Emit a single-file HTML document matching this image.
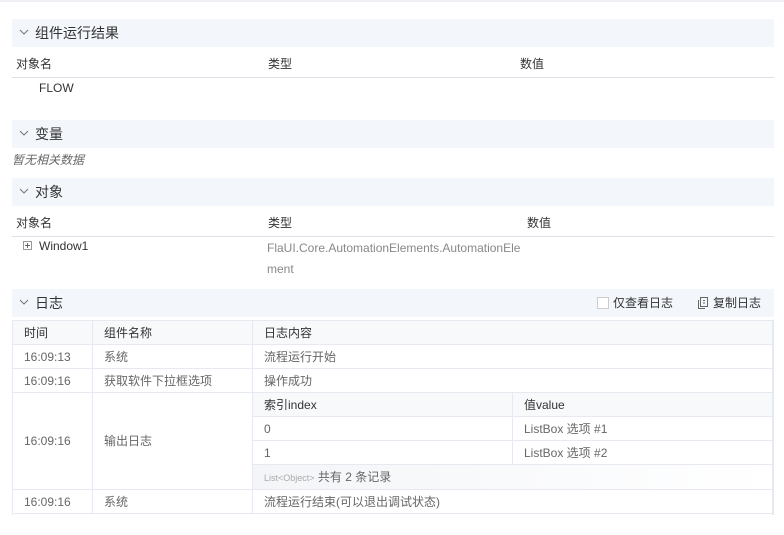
<!DOCTYPE html>
<html><head><meta charset="utf-8"><style>
*{margin:0;padding:0;box-sizing:border-box}
body{width:784px;height:535px;background:#fff;font-family:"Liberation Sans","Noto Sans CJK SC",sans-serif;font-size:12px;color:#333;position:relative;overflow:hidden}
.a{position:absolute;white-space:nowrap}
.hd{position:absolute;left:12px;width:762px;height:28px;background:#f3f6fb;font-size:14px;line-height:28px;padding-left:23px;color:#333}
.hd svg{position:absolute;left:7px;top:10px}
.th{position:absolute;left:12px;width:762px;height:27px;border-bottom:1px solid #dcdfe6;line-height:26px}
.g{color:#666}
.c{position:absolute;border-right:1px solid #e6e9f0;border-bottom:1px solid #e6e9f0;line-height:24px;padding-left:11px;color:#666}
</style></head><body>
<div class="a" style="left:0;top:0;width:784px;height:2px;background:#eef0f3"></div>
<div class="hd" style="top:19px"><svg width="10" height="7"><path d="M1 1L5 5L9 1" stroke="#777" fill="none"/></svg>组件运行结果</div>
<div class="th" style="top:51px"><span class="a" style="left:4px">对象名</span><span class="a" style="left:256px">类型</span><span class="a" style="left:508px">数值</span></div>
<div class="a" style="left:39px;top:80px;line-height:16px">FLOW</div>
<div class="hd" style="top:120px"><svg width="10" height="7"><path d="M1 1L5 5L9 1" stroke="#777" fill="none"/></svg>变量</div>
<div class="a g" style="left:12px;top:152px;line-height:16px;font-style:italic">暂无相关数据</div>
<div class="hd" style="top:178px"><svg width="10" height="7"><path d="M1 1L5 5L9 1" stroke="#777" fill="none"/></svg>对象</div>
<div class="th" style="top:210px"><span class="a" style="left:4px">对象名</span><span class="a" style="left:256px">类型</span><span class="a" style="left:515px">数值</span></div>
<svg class="a" style="left:23px;top:241px" width="9" height="9"><rect x=".5" y=".5" width="8" height="8" fill="none" stroke="#999"/><path d="M2 4.5H7M4.5 2V7" stroke="#666"/></svg>
<div class="a" style="left:39px;top:238px;line-height:16px">Window1</div>
<div class="a" style="left:267px;top:238px;line-height:21px;color:#888;white-space:normal;width:260px;word-break:break-all">FlaUI.Core.AutomationElements.AutomationElement</div>
<div class="hd" style="top:289px"><svg width="10" height="7"><path d="M1 1L5 5L9 1" stroke="#777" fill="none"/></svg>日志
<span class="a" style="left:585px;top:8px;width:12px;height:12px;border:1px solid #ccc;background:#fff"></span>
<span class="a" style="left:601px;top:0;font-size:12px">仅查看日志</span>
<svg class="a" style="left:686px;top:8px" width="10" height="12"><rect x="2.5" y=".5" width="7" height="9" fill="none" stroke="#666"/><path d="M.5 3V11.5H7M5 3.5H7M5 6H7" stroke="#666" fill="none"/></svg>
<span class="a" style="left:701px;top:0;font-size:12px">复制日志</span></div>
<div class="a" style="left:12px;top:320px;width:762px;height:195px;border:1px solid #e6e9f0;border-bottom:none;border-right:2px solid #e6e9f0"></div>
<div class="a" style="left:13px;top:321px;width:759px;height:24px;background:#f7f9fa"></div>
<div class="c" style="left:13px;top:321px;width:80px;height:24px;color:#333">时间</div>
<div class="c" style="left:93px;top:321px;width:160px;height:24px;color:#333">组件名称</div>
<div class="c" style="left:253px;top:321px;width:519px;height:24px;color:#333;border-right:none">日志内容</div>
<div class="c" style="left:13px;top:345px;width:80px;height:24px">16:09:13</div>
<div class="c" style="left:93px;top:345px;width:160px;height:24px">系统</div>
<div class="c" style="left:253px;top:345px;width:519px;height:24px;border-right:none">流程运行开始</div>
<div class="c" style="left:13px;top:369px;width:80px;height:24px">16:09:16</div>
<div class="c" style="left:93px;top:369px;width:160px;height:24px">获取软件下拉框选项</div>
<div class="c" style="left:253px;top:369px;width:519px;height:24px;border-right:none">操作成功</div>
<div class="c" style="left:13px;top:393px;width:80px;height:97px;line-height:96px">16:09:16</div>
<div class="c" style="left:93px;top:393px;width:160px;height:97px;line-height:96px">输出日志</div>
<div class="c" style="left:253px;top:393px;width:260px;height:24px;background:#f7f9fa;color:#333">索引index</div>
<div class="c" style="left:513px;top:393px;width:259px;height:24px;background:#f7f9fa;color:#333;border-right:none">值value</div>
<div class="c" style="left:253px;top:417px;width:260px;height:24px">0</div>
<div class="c" style="left:513px;top:417px;width:259px;height:24px;border-right:none">ListBox 选项 #1</div>
<div class="c" style="left:253px;top:441px;width:260px;height:24px">1</div>
<div class="c" style="left:513px;top:441px;width:259px;height:24px;border-right:none">ListBox 选项 #2</div>
<div class="c" style="left:253px;top:465px;width:519px;height:25px;background:linear-gradient(90deg,#f3f5f8,#fff);border-right:none;line-height:25px"><span style="font-size:9px;color:#aaa">List&lt;Object&gt;</span> 共有 2 条记录</div>
<div class="c" style="left:13px;top:490px;width:80px;height:24px">16:09:16</div>
<div class="c" style="left:93px;top:490px;width:160px;height:24px">系统</div>
<div class="c" style="left:253px;top:490px;width:519px;height:24px;border-right:none">流程运行结束(可以退出调试状态)</div>
</body></html>
